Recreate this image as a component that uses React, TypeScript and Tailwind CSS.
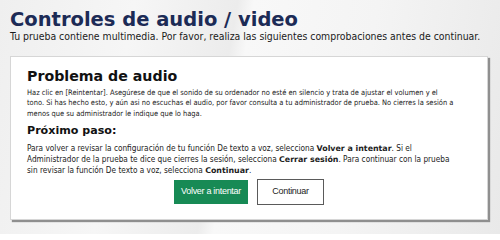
const condensed = { fontFamily: '"DejaVu Sans Condensed", "DejaVu Sans", Verdana, sans-serif' }

function Strong({ children }: { children: React.ReactNode }) {
  return (
    <b className="text-[7.9px] font-bold" style={{ fontFamily: '"DejaVu Sans", Verdana, sans-serif' }}>
      {children}
    </b>
  )
}

export default function App() {
  return (
    <div
      className="h-[234px] w-[500px] overflow-hidden bg-[linear-gradient(100deg,#efefef_0%,#f6f6f6_25%,#ececec_44%,#f8f8f8_47%,#f4f4f4_70%,#e9e9e9_100%)] px-[10px] pt-[10px]"
      style={{ fontFamily: '"DejaVu Sans", Verdana, sans-serif' }}
    >
      <h1 className="text-[19.5px] font-bold leading-[20px] text-[#1c2b56]">Controles de audio / video</h1>
      <p className="whitespace-nowrap text-[10.4px] leading-[12px] text-[#1a1a1a]" style={condensed}>
        Tu prueba contiene multimedia. Por favor, realiza las siguientes comprobaciones antes de continuar.
      </p>

      <div className="mt-[14px] h-[164px] w-[478px] border border-[#d6d6d6] bg-white px-[16px] pt-[11px] shadow-[2px_2px_1px_#8f8f8f]">
        <h2 className="text-[14.2px] font-bold leading-[17px] text-[#111]">Problema de audio</h2>
        <p className="mt-[2.5px] whitespace-nowrap text-[7.45px] leading-[10.5px] text-[#222]" style={condensed}>
          Haz clic en [Reintentar]. Asegúrese de que el sonido de su ordenador no esté en silencio y trata de ajustar el volumen y el
          <br />
          tono. Si has hecho esto, y aún asi no escuchas el audio, por favor consulta a tu administrador de prueba. No cierres la sesión a
          <br />
          menos que su administrador le indique que lo haga.
        </p>

        <h3 className="mt-[5px] text-[11.1px] font-bold leading-[14px] text-[#111]">Próximo paso:</h3>
        <p className="mt-[5px] whitespace-nowrap text-[8.2px] leading-[10px] text-[#222]" style={condensed}>
          Para volver a revisar la configuración de tu función De texto a voz, selecciona <Strong>Volver a intentar</Strong>. Si el
          <br />
          Administrador de la prueba te dice que cierres la sesión, selecciona <Strong>Cerrar sesión</Strong>. Para continuar con la prueba
          <br />
          sin revisar la función De texto a voz, selecciona <Strong>Continuar</Strong>.
        </p>

        <div
          className="mt-[3px] flex items-center justify-center gap-[9px] text-[9px] tracking-[-0.3px]"
          style={{ fontFamily: '"Liberation Sans", Arial, sans-serif' }}
        >
          <button className="h-[24px] w-[74px] bg-[#178a55] text-white">Volver a intentar</button>
          <button className="h-[26px] w-[67px] border border-[#5a5a5a] bg-white text-[#222]">Continuar</button>
        </div>
      </div>
    </div>
  )
}
